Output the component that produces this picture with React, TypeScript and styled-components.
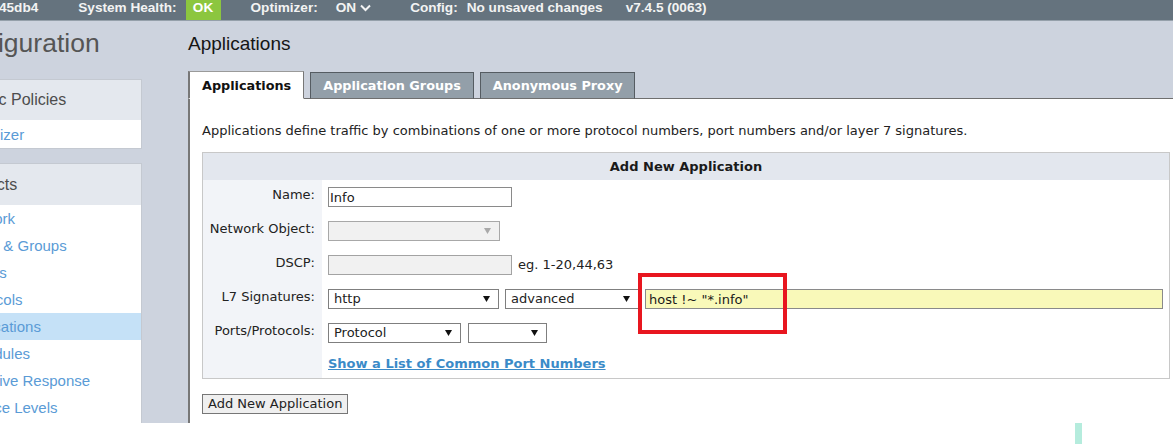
import React from "react";
import styled, { createGlobalStyle } from "styled-components";

const GlobalStyle = createGlobalStyle`
  html, body { margin: 0; padding: 0; background: #ffffff; overflow: hidden; }
  body { font-family: "Liberation Sans", Arial, sans-serif; }
  * { box-sizing: border-box; }
`;

const Page = styled.div`
  position: relative;
  width: 1173px;
  height: 444px;
  overflow: hidden;
  background: #ffffff;
`;

/* ---------- top status bar ---------- */
const TopBar = styled.header`
  height: 21px;
  background: #65737e;
  border-bottom: 1px solid #95a0aa;
  display: flex;
  align-items: flex-start;
  color: #f3f3f3;
  font: bold 13.6px/15px "Liberation Sans", Arial, sans-serif;
  white-space: nowrap;
`;

const TopItem = styled.span<{ $ml: number }>`
  margin-left: ${(p) => p.$ml}px;
  display: inline-flex;
  align-items: center;
`;

const OkBadge = styled.span<{ $ml: number }>`
  margin-left: ${(p) => p.$ml}px;
  width: 35px;
  height: 20px;
  text-align: center;
  background: #8cc63f;
  color: #ffffff;
`;

const Chevron = styled.svg`
  margin-left: 4px;
  margin-top: 1px;
`;

/* ---------- body ---------- */
const Body = styled.div`
  display: flex;
  height: 402px;
  background: #cdd3de;
  overflow: hidden;
`;

const Sidebar = styled.aside`
  flex: 0 0 197px;
  margin-left: -55px;
  display: flex;
  flex-direction: column;
`;

const SideTitle = styled.div`
  height: 58px;
  padding-top: 7px;
  margin-left: -3px;
  font: 26.5px/30px "Liberation Sans", Arial, sans-serif;
  color: #555555;
  white-space: nowrap;
`;

const SidePanel = styled.div<{ $mt: number; $grow?: boolean }>`
  margin-top: ${(p) => p.$mt}px;
  background: #ffffff;
  border: 1px solid #c4c9d1;
  ${(p) => (p.$grow ? "flex: 1; border-bottom: none;" : "")}
`;

const SideHeader = styled.div<{ $h: number }>`
  height: ${(p) => p.$h}px;
  display: flex;
  align-items: center;
  padding-left: 17px;
  background: #e4e8ee;
  font: 16px/18px "Liberation Sans", Arial, sans-serif;
  color: #4d4d4d;
  white-space: nowrap;
`;

const SideItem = styled.div<{ $h: number; $active?: boolean }>`
  height: ${(p) => p.$h}px;
  display: flex;
  align-items: center;
  padding-left: 14px;
  background: ${(p) => (p.$active ? "#c5e1f7" : "transparent")};
  font: 15px/17px "Liberation Sans", Arial, sans-serif;
  color: #5a9bd6;
  white-space: nowrap;
`;

const Main = styled.main`
  flex: 1;
  min-width: 0;
  margin-left: 46px;
  display: flex;
  flex-direction: column;
`;

const PageHeading = styled.h1`
  margin: 0;
  height: 50px;
  padding-top: 12px;
  font: normal 19px/22px "Liberation Sans", Arial, sans-serif;
  color: #151515;
`;

const TabRow = styled.div`
  position: relative;
  z-index: 1;
  display: flex;
  align-items: flex-end;
  gap: 6px;
  height: 28px;
  margin-bottom: -1px;
`;

const Tab = styled.div<{ $active?: boolean }>`
  height: ${(p) => (p.$active ? 28 : 27)}px;
  padding: 0 12px;
  display: flex;
  align-items: center;
  padding-top: ${(p) => (p.$active ? 1 : 0)}px;
  font: bold 12.8px/16px "DejaVu Sans", Verdana, sans-serif;
  white-space: nowrap;
  color: ${(p) => (p.$active ? "#111111" : "#ffffff")};
  background: ${(p) => (p.$active ? "#ffffff" : "#939fa9")};
  border-top: 1px solid ${(p) => (p.$active ? "#9a9a9a" : "#555c62")};
  border-left: ${(p) => (p.$active ? "2px solid #777777" : "1px solid #555c62")};
  border-right: 1px solid ${(p) => (p.$active ? "#777777" : "#555c62")};
  border-bottom: 1px solid ${(p) => (p.$active ? "#ffffff" : "#6f6f6f")};
`;

const Panel = styled.section`
  flex: 1;
  background: #ffffff;
  border-left: 2px solid #777777;
  border-top: 1px solid #6f6f6f;
  padding: 24px 0 0 12px;
  font: 13px/16px "DejaVu Sans", Verdana, sans-serif;
  color: #222222;
`;

const Intro = styled.p`
  margin: 0 0 13px;
  white-space: nowrap;
`;

const FormTable = styled.div`
  width: 968px;
  border: 1px solid #c8c8c8;
`;

const FormTitle = styled.div`
  height: 27px;
  display: flex;
  align-items: center;
  justify-content: center;
  background: #e3e7ee;
  font-weight: bold;
  color: #1a1a1a;
`;

const FormGrid = styled.div`
  display: grid;
  grid-template-columns: 119px 1fr;
  grid-template-rows: repeat(5, 34px) 28px;
`;

const Label = styled.div`
  background: #f2f4f8;
  display: flex;
  align-items: center;
  justify-content: flex-end;
  padding: 0 7px 4px 0;
  white-space: nowrap;
  color: #222222;
`;

const Field = styled.div<{ $gap?: number }>`
  display: flex;
  align-items: center;
  gap: ${(p) => p.$gap ?? 6}px;
  padding-left: 6px;
`;

const TextInput = styled.input<{ $w: number; $tone?: "plain" | "disabled" | "highlight" }>`
  width: ${(p) => p.$w}px;
  height: 20px;
  margin: 0;
  padding: 0 0 0 ${(p) => (p.$tone === "highlight" ? 3 : 1)}px;
  border: 1px solid ${(p) => (p.$tone === "disabled" ? "#a3a3a3" : "#8a8a8a")};
  background: ${(p) =>
    p.$tone === "disabled" ? "#f1f1f1" : p.$tone === "highlight" ? "#f9f9b9" : "#ffffff"};
  font: 13px/18px "DejaVu Sans", Verdana, sans-serif;
  color: #1a1a1a;
  outline: none;
`;

const SelectBox = styled.div<{ $w: number; $disabled?: boolean }>`
  width: ${(p) => p.$w}px;
  height: 20px;
  display: flex;
  align-items: center;
  padding: 0 8px 0 5px;
  border: 1px solid ${(p) => (p.$disabled ? "#a8a8a8" : "#7f7f7f")};
  background: ${(p) => (p.$disabled ? "#f1f1f1" : "#ffffff")};
  color: #222222;
  white-space: nowrap;
`;

const SelectText = styled.span`
  flex: 1;
`;

const Hint = styled.span`
  color: #222222;
`;

const PortLink = styled.a`
  font-weight: bold;
  color: #3b8bc8;
  text-decoration: underline;
`;

const AddButton = styled.button`
  margin-top: 15px;
  height: 20px;
  padding: 0 5px;
  border: 1px solid #767676;
  background: #efefef;
  font: 13px/16px "DejaVu Sans", Verdana, sans-serif;
  color: #222222;
`;

const Callout = styled.div`
  position: absolute;
  left: 638px;
  top: 273px;
  width: 149px;
  height: 61px;
  border: 4px solid #e8161f;
  pointer-events: none;
`;

const Speck = styled.div`
  position: absolute;
  left: 1075px;
  top: 423px;
  width: 7px;
  height: 21px;
  background: #b5ecdd;
`;

const Caret = ({ muted }: { muted?: boolean }) => (
  <svg width="7" height="6" viewBox="0 0 7 6">
    <path d="M0 0H7L3.5 6Z" fill={muted ? "#a9a9a9" : "#111111"} />
  </svg>
);

const Select = ({ w, value, disabled }: { w: number; value?: string; disabled?: boolean }) => (
  <SelectBox $w={w} $disabled={disabled}>
    <SelectText>{value}</SelectText>
    <Caret muted={disabled} />
  </SelectBox>
);

const objectItems = [
  "Network",
  "Users & Groups",
  "VLANs",
  "Protocols",
  "Applications",
  "Schedules",
  "Adaptive Response",
  "Service Levels",
];

export default function App() {
  return (
    <Page>
      <GlobalStyle />
      <TopBar>
        <TopItem $ml={-1}>45db4</TopItem>
        <TopItem $ml={40}>System Health:</TopItem>
        <OkBadge $ml={9}>OK</OkBadge>
        <TopItem $ml={30}>Optimizer:</TopItem>
        <TopItem $ml={18}>
          ON
          <Chevron width="11" height="8" viewBox="0 0 11 8">
            <polyline points="1,1.5 5.5,6 10,1.5" fill="none" stroke="#f3f3f3" strokeWidth="2" />
          </Chevron>
        </TopItem>
        <TopItem $ml={39}>Config:</TopItem>
        <TopItem $ml={9}>No unsaved changes</TopItem>
        <TopItem $ml={23}>v7.4.5 (0063)</TopItem>
      </TopBar>
      <Body>
        <Sidebar>
          <SideTitle>Configuration</SideTitle>
          <SidePanel $mt={0}>
            <SideHeader $h={40}>Traffic Policies</SideHeader>
            <SideItem $h={28}>Optimizer</SideItem>
          </SidePanel>
          <SidePanel $mt={14} $grow>
            <SideHeader $h={41}>Objects</SideHeader>
            {objectItems.map((item) => (
              <SideItem key={item} $h={27} $active={item === "Applications"}>
                {item}
              </SideItem>
            ))}
          </SidePanel>
        </Sidebar>
        <Main>
          <PageHeading>Applications</PageHeading>
          <TabRow>
            <Tab $active>Applications</Tab>
            <Tab>Application Groups</Tab>
            <Tab>Anonymous Proxy</Tab>
          </TabRow>
          <Panel>
            <Intro>
              Applications define traffic by combinations of one or more protocol numbers, port numbers and/or layer 7
              signatures.
            </Intro>
            <FormTable>
              <FormTitle>Add New Application</FormTitle>
              <FormGrid>
                <Label>Name:</Label>
                <Field>
                  <TextInput $w={184} readOnly value="Info" />
                </Field>
                <Label>Network Object:</Label>
                <Field>
                  <Select w={172} disabled />
                </Field>
                <Label>DSCP:</Label>
                <Field>
                  <TextInput $w={184} $tone="disabled" readOnly value="" />
                  <Hint>eg. 1-20,44,63</Hint>
                </Field>
                <Label>L7 Signatures:</Label>
                <Field>
                  <Select w={171} value="http" />
                  <Select w={134} value="advanced" />
                  <TextInput $w={518} $tone="highlight" readOnly value={'host !~ "*.info"'} />
                </Field>
                <Label>Ports/Protocols:</Label>
                <Field $gap={7}>
                  <Select w={133} value="Protocol" />
                  <Select w={79} />
                </Field>
                <Label />
                <Field>
                  <PortLink href="#">Show a List of Common Port Numbers</PortLink>
                </Field>
              </FormGrid>
            </FormTable>
            <AddButton type="button">Add New Application</AddButton>
          </Panel>
        </Main>
      </Body>
      <Callout />
      <Speck />
    </Page>
  );
}
